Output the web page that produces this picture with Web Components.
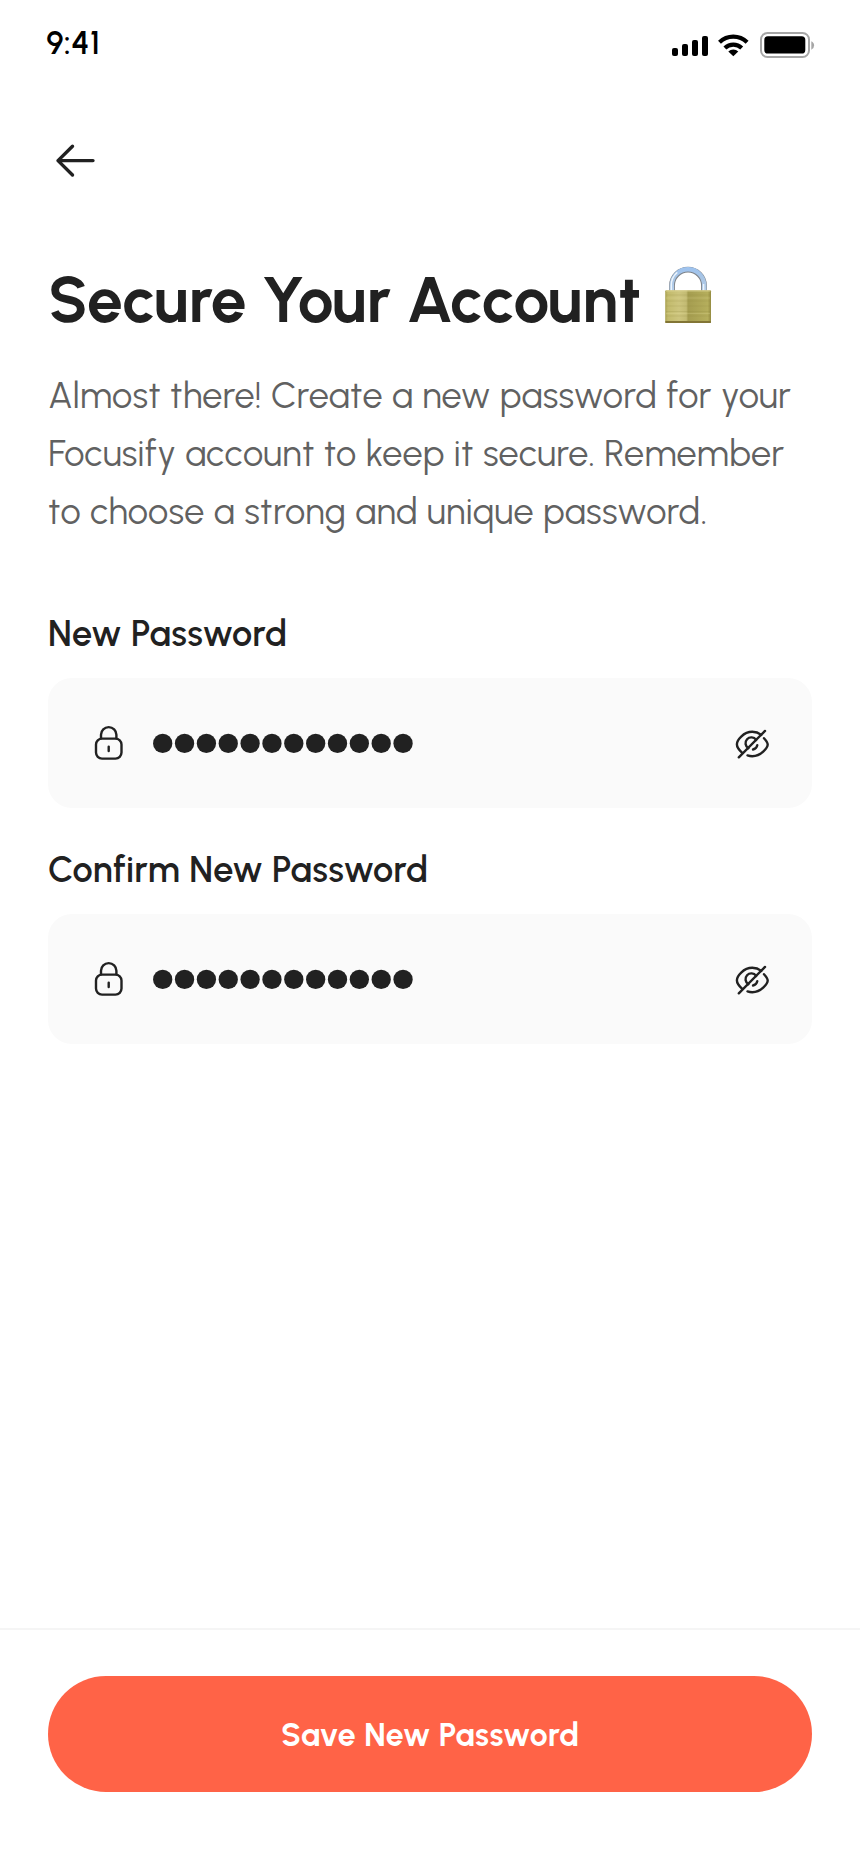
<!DOCTYPE html>
<html lang="en">
<head>
<meta charset="utf-8">
<title>Secure Your Account</title>
<style>
html,body{margin:0;padding:0;background:#fff}
body{font-family:Urbanist,Inter,Lato,sans-serif;color:#212121}
</style>
</head>
<body>
<password-screen></password-screen>
<script>
const define = (name, html, after) => customElements.define(name, class extends HTMLElement {
  connectedCallback() {
    if (this.shadowRoot) return;
    const t = document.createElement('template');
    t.innerHTML = html;
    this.attachShadow({mode: 'open'}).append(t.content.cloneNode(true));
    if (after) after.call(this);
  }
});

/* One line of type, tracked evenly so that its ink runs from "from" to "to". */
define('tracked-line', `<style>
:host{display:block;white-space:pre;font-feature-settings:"cv11","calt" 0;font-variant-ligatures:none;font-kerning:normal}
div{width:max-content}
</style><div></div>`, function () {
  const box = this.shadowRoot.querySelector('div');
  const text = this.textContent.trim();
  const from = +this.getAttribute('from'), to = +this.getAttribute('to');
  const cs = getComputedStyle(this);
  /* Side bearings are read at a large size, where rounding does not matter. */
  const ctx = document.createElement('canvas').getContext('2d');
  const size = parseFloat(cs.fontSize), k = size / 1000;
  ctx.font = `${cs.fontWeight} 1000px ${cs.fontFamily}`;
  const first = ctx.measureText(text[0]), last = ctx.measureText(text[text.length - 1]);
  const left = -first.actualBoundingBoxLeft * k;
  const right = (last.width - last.actualBoundingBoxRight) * k;
  box.textContent = text;
  const ink = box.getBoundingClientRect().width - left - right;
  box.style.letterSpacing = (to - from - ink) / (text.length - 1) + 'px';
  box.style.marginLeft = (from - left) + 'px';
});

define('status-bar', `<style>
:host{display:flex;justify-content:space-between;height:90px;box-sizing:border-box;padding-top:23px;color:#000}
tracked-line{font-size:32px;line-height:40px;font-weight:600}
svg{display:block;margin:3px 42px 0 0}
</style>
<tracked-line from="46.7" to="97.5">9:41</tracked-line>
<svg width="148" height="38" viewBox="670 26 148 38">
<rect x="672" y="48" width="6" height="8" rx="2"/><rect x="682" y="44" width="6" height="12" rx="2"/><rect x="692" y="40" width="6" height="16" rx="2"/><rect x="702" y="36" width="6" height="20" rx="2"/>
<g fill="none" stroke="#000" stroke-width="4.2"><path d="M719.5 42.2a20 20 0 0 1 27.6 0"/><path d="M724.9 47.9a12.2 12.2 0 0 1 16.8 0"/></g>
<path d="M728.3 51.6a7.2 7.2 0 0 1 10 0L733.3 56.3z"/>
<rect x="761" y="33" width="48" height="24" rx="6.5" fill="none" stroke="#a6a6a6" stroke-width="2"/>
<rect x="764.3" y="36.3" width="41" height="17.2" rx="3.6"/>
<path d="M811.3 41.2q2.8 1.2 2.8 4.3t-2.8 4.3z" fill="#a6a6a6"/>
</svg>`);

define('back-button', `<style>:host{display:block;height:140px;padding:46px 0 0 48px;box-sizing:border-box}svg{display:block}</style>
<svg width="56" height="48" viewBox="48 136 56 48" fill="none" stroke="#212121" stroke-width="3.4" stroke-linecap="round" stroke-linejoin="round"><path d="M93 160.6H58M72.5 146.2L58 160.6l14.5 14.4"/></svg>`);

define('padlock-emoji', `<style>:host{display:block}svg{display:block}</style>
<svg width="48" height="60" viewBox="664 265 48 60">
<defs>
<linearGradient id="b"><stop offset="0" stop-color="#aaa252"/><stop offset=".06" stop-color="#c3bb6d"/><stop offset=".3" stop-color="#cdc57e"/><stop offset=".46" stop-color="#c3bb73"/><stop offset=".5" stop-color="#a59d50"/><stop offset=".93" stop-color="#b5ae5c"/><stop offset="1" stop-color="#938a40"/></linearGradient>
<linearGradient id="s" x1="0" x2="0" y1="0" y2="1"><stop offset="0" stop-color="#9fc3ee"/><stop offset=".4" stop-color="#a9c5e4"/><stop offset="1" stop-color="#b7d0ec"/></linearGradient>
</defs>
<g fill="none">
<path d="M672 292V285.7a16 16 0 0 1 32 0V292" stroke="#7d8288" stroke-width="5.8"/>
<path d="M671.8 292V285.4a16.2 16.2 0 0 1 32.4 0V292" stroke="url(#s)" stroke-width="4.4"/>
<path d="M671.3 291V285a16.7 16.7 0 0 1 6-12.6M703.6 291v-7" stroke="#edf5fc" stroke-width="1.4"/>
</g>
<rect x="665.2" y="290.3" width="45.8" height="32.7" rx="1" fill="url(#b)"/>
<path d="M666 290.9h44.4" stroke="#d9d08e" stroke-width="1"/>
<path d="M666 295h44M666 301h44M666 306h44M666 311.5h44M666 316h44" stroke="#8e873a" stroke-opacity=".2" stroke-width="1"/>
<path d="M666 298h44M666 313.5h44" stroke="#f1ebaa" stroke-opacity=".2" stroke-width="1"/>
<path d="M665.4 321.9h45.4" stroke="#827535" stroke-width="2"/>
</svg>`);

define('page-intro', `<style>
:host{display:block;height:379px;box-sizing:border-box;padding-top:30px}
header{display:flex;height:107px}
h1{margin:0;font-size:64px;line-height:80px;font-weight:700;width:664px}
padlock-emoji{margin-top:5px}
p{margin:0;font-size:36px;line-height:58px;font-weight:400;color:#616161}
</style>
<header><h1><tracked-line from="51" to="639">Secure Your Account</tracked-line></h1><padlock-emoji></padlock-emoji></header>
<p>
<tracked-line from="49.4" to="790.9">Almost there! Create a new password for your</tracked-line>
<tracked-line from="50" to="784.3">Focusify account to keep it secure. Remember</tracked-line>
<tracked-line from="49.2" to="705.2">to choose a strong and unique password.</tracked-line>
</p>`);

define('lock-icon', `<style>:host{display:block}svg{display:block}</style>
<svg width="32" height="40" viewBox="93 722.7 32 40" fill="none" stroke="#212121" stroke-width="2.4" stroke-linecap="round"><path d="M101 738v-3.5a7.7 7.7 0 0 1 15.4 0v3.5"/><rect x="96" y="738.3" width="25.5" height="20" rx="6"/><path d="M108.7 746.5v4.2"/></svg>`);

define('eye-off-icon', `<style>:host{display:block}svg{display:block}</style>
<svg width="36" height="34" viewBox="734 727 36 34" fill="none" stroke="#212121" stroke-width="2.4" stroke-linecap="round" stroke-linejoin="round"><path d="M765 730.9L738.8 757.3"/><path d="M742.2 752.8C738.8 749.8 736.9 745.8 736.9 744.2C736.9 740.4 743.3 731.8 752.3 731.8C755.7 731.8 758.8 733 761.4 734.9"/><path d="M764 738.2C766.4 740.8 767.7 743.2 767.7 744.5C767.7 747.3 761.5 756.2 752.3 756.2C750.6 756.2 749 755.9 747.5 755.4"/><path d="M748.4 748.2A5.8 5.8 0 1 1 756.1 739.9M757.3 745.1A5.4 5.4 0 0 1 753 749.5"/></svg>`);

define('password-dots', `<style>:host{display:block}svg{display:block}</style>
<svg width="264" height="22" viewBox="0 0 264 22" fill="#212121">${Array.from({length: 12}, (_, i) => `<circle cx="${(10.7 + i * 21.85).toFixed(2)}" cy="11.4" r="9.65"/>`).join('')}</svg>`);

define('password-field', `<style>
:host{display:block;height:236px}
.label{display:block;height:69px;box-sizing:border-box;padding-top:1px;font-size:36px;line-height:48px;font-weight:600}
.box{margin:0 48px;height:130px;border-radius:24px;background:#fafafa;display:flex;align-items:center;box-sizing:border-box;padding:0 42px 0 45px}
password-dots{margin-left:27px}
eye-off-icon{margin-left:auto;margin-top:2px}
</style>
<slot></slot>
<div class="box"><lock-icon></lock-icon><password-dots></password-dots><eye-off-icon></eye-off-icon></div>`, function () {
  const line = document.createElement('tracked-line');
  line.className = 'label';
  line.setAttribute('from', this.getAttribute('from'));
  line.setAttribute('to', this.getAttribute('to'));
  line.textContent = this.getAttribute('label');
  this.shadowRoot.querySelector('slot').replaceWith(line);
});

define('action-bar', `<style>
:host{display:block;margin-top:auto;height:236px;box-sizing:border-box;border-top:2px solid #f5f5f5;padding:46px 48px 0}
button{display:flex;align-items:center;width:764px;height:116px;border:0;border-radius:58px;background:#ff6347;color:#fff;padding:2px 0 0;margin:0;font-family:inherit;font-size:32px;line-height:40px;font-weight:700}
</style><button type="button"><slot></slot></button>`);

define('password-screen', `<style>
:host{display:flex;flex-direction:column;width:860px;height:1864px;background:#fff;overflow:hidden}
</style>
<status-bar></status-bar>
<back-button></back-button>
<page-intro></page-intro>
<password-field label="New Password" from="49.8" to="285.2"></password-field>
<password-field label="Confirm New Password" from="49.2" to="426.2"></password-field>
<action-bar><tracked-line from="234.6" to="529.2">Save New Password</tracked-line></action-bar>`);
</script>
</body>
</html>
